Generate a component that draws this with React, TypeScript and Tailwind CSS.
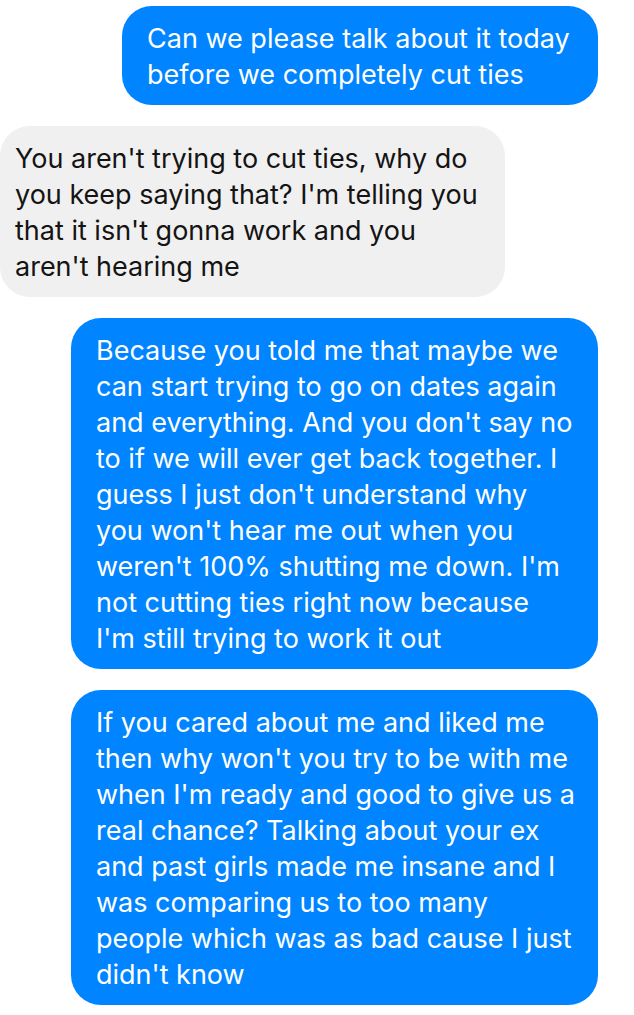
const messages: { mine: boolean; width: string; lines: string[] }[] = [
  {
    mine: true,
    width: 'w-[476px]',
    lines: ['Can we please talk about it today', 'before we completely cut ties'],
  },
  {
    mine: false,
    width: 'w-[505px]',
    lines: [
      "You aren't trying to cut ties, why do",
      "you keep saying that? I'm telling you",
      "that it isn't gonna work and you",
      "aren't hearing me",
    ],
  },
  {
    mine: true,
    width: 'w-[527px]',
    lines: [
      'Because you told me that maybe we',
      'can start trying to go on dates again',
      "and everything. And you don't say no",
      'to if we will ever get back together. I',
      "guess I just don't understand why",
      "you won't hear me out when you",
      "weren't 100% shutting me down. I'm",
      'not cutting ties right now because',
      "I'm still trying to work it out",
    ],
  },
  {
    mine: true,
    width: 'w-[527px]',
    lines: [
      'If you cared about me and liked me',
      "then why won't you try to be with me",
      "when I'm ready and good to give us a",
      'real chance? Talking about your ex',
      'and past girls made me insane and I',
      'was comparing us to too many',
      'people which was as bad cause I just',
      "didn't know",
    ],
  },
]

export default function App() {
  return (
    <div className="w-[634px] h-[1015px] overflow-hidden bg-white flex flex-col gap-[21px] pt-[6px] font-['Inter',sans-serif] text-[27px] leading-[36px]">
      {messages.map((m, i) => (
        <div key={i} className={m.mine ? 'flex justify-end pr-[36px]' : 'flex justify-start'}>
          <div
            className={
              m.mine
                ? `${m.width} rounded-[30px] bg-[#0084ff] text-white pl-[25px] pr-[10px] pt-[15px] pb-[12px]`
                : `${m.width} rounded-[30px] bg-[#f1f0f0] text-[#141414] pl-[15px] pr-[10px] pt-[15px] pb-[12px]`
            }
          >
            {m.lines.map((l, j) => (
              <div key={j} className="whitespace-nowrap">{l}</div>
            ))}
          </div>
        </div>
      ))}
    </div>
  )
}
